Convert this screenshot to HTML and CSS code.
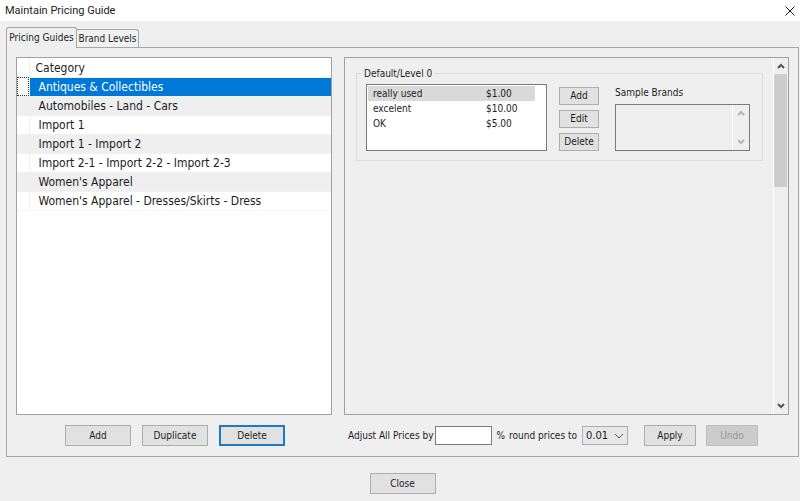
FILE: index.html
```html
<!DOCTYPE html>
<html lang="en">
<head>
<meta charset="utf-8">
<title>Maintain Pricing Guide</title>
<link rel="stylesheet" href="styles.css">
</head>
<body>
<header class="titlebar">
  <h1 class="title">Maintain Pricing Guide</h1>
  <button class="window-close" type="button" aria-label="Close window"><svg width="10" height="10" viewBox="0 0 10 10"><path d="M.5 .5l9 9M9.5 .5l-9 9"/></svg></button>
</header>
<main class="dialog">
  <div class="tabs" role="tablist">
    <button class="tab tab-active" type="button" role="tab" aria-selected="true">Pricing Guides</button>
    <button class="tab" type="button" role="tab" aria-selected="false">Brand Levels</button>
  </div>
  <section class="page">
    <div class="categories">
      <table class="category-table">
        <thead><tr><th class="marker"></th><th>Category</th></tr></thead>
        <tbody>
          <tr class="selected"><td class="marker"></td><td>Antiques &amp; Collectibles</td></tr>
          <tr><td class="marker"></td><td>Automobiles - Land - Cars</td></tr>
          <tr><td class="marker"></td><td>Import 1</td></tr>
          <tr><td class="marker"></td><td>Import 1 - Import 2</td></tr>
          <tr><td class="marker"></td><td>Import 2-1 - Import 2-2 - Import 2-3</td></tr>
          <tr><td class="marker"></td><td>Women's Apparel</td></tr>
          <tr><td class="marker"></td><td>Women's Apparel - Dresses/Skirts - Dress</td></tr>
        </tbody>
      </table>
    </div>
    <div class="levels">
      <div class="levels-body">
        <section class="level" aria-labelledby="level-name">
          <h2 class="level-name" id="level-name">Default/Level 0</h2>
          <div class="prices">
            <table class="price-table">
              <tbody>
                <tr class="price-selected"><td>really used</td><td class="amount">$1.00</td></tr>
                <tr><td>excelent</td><td class="amount">$10.00</td></tr>
                <tr><td>OK</td><td class="amount">$5.00</td></tr>
              </tbody>
            </table>
          </div>
          <div class="price-actions">
            <button class="button button-small" type="button">Add</button>
            <button class="button button-small" type="button">Edit</button>
            <button class="button button-small" type="button">Delete</button>
          </div>
          <div class="brands">
            <label for="brands">Sample Brands</label>
            <div class="brands-box">
              <textarea id="brands" readonly></textarea>
              <div class="scrollbar scrollbar-disabled">
                <button class="arrow" type="button" aria-label="Scroll up" disabled><svg width="8" height="6" viewBox="0 0 8 6"><path d="M1 5l3-3 3 3"/></svg></button>
                <button class="arrow" type="button" aria-label="Scroll down" disabled><svg width="8" height="6" viewBox="0 0 8 6"><path d="M1 1l3 3 3-3"/></svg></button>
              </div>
            </div>
          </div>
        </section>
      </div>
      <div class="scrollbar">
        <button class="arrow" type="button" aria-label="Scroll up"><svg width="8" height="6" viewBox="0 0 8 6"><path d="M1 5l3-3 3 3"/></svg></button>
        <div class="track"><div class="thumb"></div></div>
        <button class="arrow" type="button" aria-label="Scroll down"><svg width="8" height="6" viewBox="0 0 8 6"><path d="M1 1l3 3 3-3"/></svg></button>
      </div>
    </div>
    <div class="category-actions">
      <button class="button" type="button">Add</button>
      <button class="button" type="button">Duplicate</button>
      <button class="button button-default" type="button">Delete</button>
    </div>
    <form class="adjust">
      <label for="percent">Adjust All Prices by</label>
      <input class="percent" id="percent" type="text">
      <span class="unit">%</span>
      <label class="round-label" for="round">round prices to</label>
      <span class="select-wrap">
        <select id="round"><option>0.01</option></select>
        <svg class="chevron" width="10" height="6" viewBox="0 0 10 6"><path d="M1 1l4 4 4-4"/></svg>
      </span>
      <button class="button button-medium" type="button">Apply</button>
      <button class="button button-medium button-undo" type="button" disabled>Undo</button>
    </form>
  </section>
  <footer class="footer"><button class="button" type="button">Close</button></footer>
</main>
</body>
</html>
```
FILE: styles.css
```css
* {
  box-sizing: border-box;
}

body {
  margin: 0;
  min-height: 100vh;
  display: flex;
  flex-direction: column;
  background: #efefef;
  color: #1c1c1c;
  font: 10px/14px "DejaVu Sans Condensed", "DejaVu Sans", sans-serif;
}

button,
input,
select,
textarea {
  margin: 0;
  padding: 0;
  border-radius: 0;
  font: inherit;
  color: inherit;
}

svg {
  display: block;
  fill: none;
  stroke: currentColor;
}

table {
  width: 100%;
  border-collapse: collapse;
}

th,
td {
  padding: 0;
  font-weight: normal;
  text-align: left;
  white-space: nowrap;
}

.titlebar {
  height: 21px;
  padding: 0 5px;
  display: flex;
  align-items: center;
  justify-content: space-between;
  background: #fff;
}

.title {
  margin: 0;
  font: 11px/20px Roboto, "Open Sans", sans-serif;
}

.window-close {
  border: 0;
  background: none;
}

.dialog {
  flex: 1;
  padding: 6px 1px 7px 6px;
  display: flex;
  flex-direction: column;
}

.tabs {
  display: flex;
  align-items: flex-end;
}

.tab {
  width: 62px;
  height: 18px;
  border: 1px solid #a6a6a6;
  border-width: 1px 1px 0 0;
  border-radius: 0 3px 0 0;
  background: #f1f1f1;
  white-space: nowrap;
}

.tab-active {
  position: relative;
  width: 71px;
  height: 21px;
  margin-bottom: -1px;
  padding-bottom: 1px;
  border-left-width: 1px;
  border-radius: 3px 3px 0 0;
  background: #efefef;
}

.page {
  flex: 1;
  padding: 9px 9px 10px;
  display: grid;
  grid-template-columns: 316fr 445fr;
  grid-template-rows: 1fr 21px;
  gap: 10px 12px;
  border: 1px solid #a6a6a6;
}

.categories {
  border: 1px solid #a0a0a0;
  background: #fff;
  font-size: 12px;
}

.category-table th,
.category-table td {
  height: 19px;
}

.category-table th {
  padding: 2px 0 0 6px;
}

.category-table td {
  padding-left: 9px;
  border-top: 1px solid #f1f1f1;
}

.category-table tbody tr:nth-child(even) {
  background: #efefef;
}

.category-table tbody tr:last-child td {
  border-bottom: 1px solid #f6f6f6;
}

.category-table .marker {
  width: 12px;
  padding: 0;
  border-right: 1px solid #f1f1f1;
}

.category-table .selected td {
  background: #0078d7;
  color: #fff;
}

.category-table .selected .marker {
  background: #fff;
  outline: 1px dotted #333;
  outline-offset: -1px;
}

.levels {
  display: flex;
  border: 1px solid #a0a0a0;
}

.levels-body {
  flex: 1;
  padding: 15px 10px 0 11px;
}

.level {
  position: relative;
  height: 88px;
  padding: 10px 12px 9px 9px;
  display: grid;
  grid-template-columns: 181fr 40px 139fr;
  column-gap: 12px;
  border: 1px solid #dcdcdc;
}

.level-name {
  position: absolute;
  top: -7px;
  left: 5px;
  margin: 0;
  padding: 0 2px;
  background: #efefef;
  font: inherit;
}

.prices {
  padding: 1px 11px 0 1px;
  border: 1px solid #7a7a7a;
  background: #fff;
}

.price-table td {
  height: 15px;
  padding-left: 5px;
}

.price-table .amount {
  width: 54px;
}

.price-selected {
  background: #d9d9d9;
}

.price-actions {
  padding-top: 3px;
  display: flex;
  flex-direction: column;
  gap: 5px;
}

.button {
  width: 66px;
  height: 21px;
  border: 1px solid #adadad;
  background: #e1e1e1;
}

.button-small {
  width: 40px;
  height: 18px;
}

.button-medium {
  width: 52px;
}

.button-default {
  border: 2px solid #1c79c4;
}

.button-undo {
  margin-left: 10px;
  border-color: #bfbfbf;
  background: #ccc;
  color: #969696;
}

.brands {
  margin-left: 4px;
  padding-top: 2px;
  display: flex;
  flex-direction: column;
  gap: 4px;
}

.brands-box {
  flex: 1;
  display: flex;
  border: 1px solid #7a7a7a;
}

.brands-box textarea {
  flex: 1;
  width: 0;
  height: 100%;
  border: 0;
  background: none;
  resize: none;
}

.scrollbar {
  width: 15px;
  display: flex;
  flex-direction: column;
  justify-content: space-between;
  border-left: 1px solid #fff;
}

.scrollbar-disabled {
  width: 17px;
}

.arrow {
  height: 16px;
  display: grid;
  place-items: center;
  border: 0;
  background: none;
  color: #555;
}

.scrollbar-disabled .arrow {
  color: #b4b4b4;
}

.arrow path {
  stroke-width: 2;
}

.track {
  flex: 1;
}

.thumb {
  width: 13px;
  height: 35%;
  background: #cdcdcd;
}

.category-actions {
  padding-left: 2px;
  display: flex;
  justify-content: center;
  gap: 11px;
}

.adjust {
  padding-left: 4px;
  display: flex;
  align-items: center;
  white-space: nowrap;
}

.percent {
  width: 57px;
  height: 19px;
  margin: 0 4px 0 2px;
  border: 1px solid #7a7a7a;
  background: #fff;
}

.round-label {
  margin: 0 5px 0 4px;
}

.select-wrap {
  position: relative;
  margin-right: 16px;
}

.select-wrap select {
  width: 46px;
  height: 19px;
  padding-left: 3px;
  display: block;
  appearance: none;
  border: 1px solid #adadad;
  background: #e8e8e8;
  font-size: 11px;
}

.chevron {
  position: absolute;
  top: 7px;
  right: 4px;
  color: #555;
  pointer-events: none;
}

.footer {
  padding-top: 16px;
  display: flex;
  justify-content: center;
}
```
